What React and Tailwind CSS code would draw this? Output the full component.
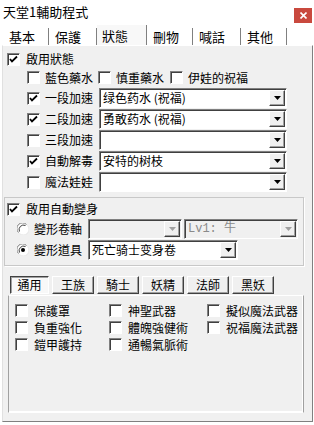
import React from "react";

const font = { fontFamily: '"Noto Sans CJK TC", "Noto Sans CJK SC", "Noto Sans", sans-serif' };

function Check({ on }) {
  return (
    <span className="w-[13px] h-[13px] shrink-0 bg-white border border-t-[#808080] border-l-[#808080] border-r-white border-b-white shadow-[inset_1px_1px_0_#404040] flex items-center justify-center">
      {on && (
        <svg width="9" height="9" viewBox="0 0 9 9">
          <path d="M1 4 L3 6.5 L8 1.5" fill="none" stroke="#000" strokeWidth="1.8" />
        </svg>
      )}
    </span>
  );
}

function Radio({ on }) {
  return (
    <svg width="12" height="12" viewBox="0 0 12 12" className="shrink-0">
      <circle cx="6" cy="6" r="5.5" fill="#fff" />
      <path d="M1.5 9.5 A5.5 5.5 0 0 1 9.5 1.5" fill="none" stroke="#808080" strokeWidth="1" />
      <path d="M2.5 8.5 A4.5 4.5 0 0 1 8.5 2.5" fill="none" stroke="#404040" strokeWidth="1" />
      <path d="M10.5 2.5 A5.5 5.5 0 0 1 2.5 10.5" fill="none" stroke="#e8e8e8" strokeWidth="1" />
      {on && <circle cx="6" cy="6" r="2" fill="#000" />}
    </svg>
  );
}

function Select({ w, text, disabled, mono }) {
  return (
    <div
      className={`h-[20px] flex items-center border border-t-[#808080] border-l-[#808080] border-r-white border-b-white shadow-[inset_1px_1px_0_#404040] ${disabled ? "bg-[#f0f0f0]" : "bg-white"}`}
      style={{ width: w }}
    >
      <span
        className={`flex-1 min-w-0 pl-[3px] text-[12px] leading-[18px] whitespace-nowrap ${disabled ? "text-[#8a8a8a]" : "text-black"}`}
        style={mono ? { fontFamily: '"Liberation Mono", "Noto Sans CJK TC", monospace' } : undefined}
      >
        {text}
      </span>
      <span className="w-[16px] h-[16px] shrink-0 mr-[1px] bg-[#f0f0f0] border border-t-white border-l-white border-r-[#404040] border-b-[#404040] shadow-[inset_-1px_-1px_0_#a0a0a0] flex items-center justify-center">
        <svg width="7" height="4" viewBox="0 0 7 4">
          <path d="M0 0 H7 L3.5 4 Z" fill={disabled ? "#a0a0a0" : "#000"} />
        </svg>
      </span>
    </div>
  );
}

function CheckLabel({ on, label, className = "" }) {
  return (
    <div className={`flex items-center gap-[5px] text-[12px] leading-none ${className}`}>
      <Check on={on} />
      <span>{label}</span>
    </div>
  );
}

const tabs = [
  ["基本", 46],
  ["保護", 48],
  ["狀態", 50],
  ["刪物", 46],
  ["喊話", 48],
  ["其他", 46],
];

const jobs = [
  ["通用", 39],
  ["王族", 42],
  ["騎士", 42],
  ["妖精", 42],
  ["法師", 42],
  ["黑妖", 42],
];

const rows = [
  [true, "一段加速", "绿色药水 (祝福)"],
  [true, "二段加速", "勇敢药水 (祝福)"],
  [false, "三段加速", ""],
  [true, "自動解毒", "安特的树枝"],
  [false, "魔法娃娃", ""],
];

export default function App() {
  return (
    <div className="w-[314px] h-[425px] bg-white text-black overflow-hidden" style={font}>
      <div className="h-[25px] flex items-center justify-between pl-[3px] pr-[2px]">
        <span className="text-[13px] leading-none mt-[-2px]">天堂1輔助程式</span>
        <div className="w-[18px] h-[15px] mt-[5px] bg-[#c9493e] flex items-center justify-center">
          <svg width="7" height="7" viewBox="0 0 7 7">
            <path d="M0.5 0.5 L6.5 6.5 M6.5 0.5 L0.5 6.5" stroke="#fff" strokeWidth="1.6" />
          </svg>
        </div>
      </div>

      <div className="h-[20px] flex items-end pl-[3px]">
        {tabs.map(([t, w]) => {
          const sel = t === "狀態";
          return (
            <div
              key={t}
              className={`flex items-center pl-[5px] text-[13px] leading-none border-r border-r-[#808080] ${sel ? "h-[20px] bg-[#f8f8f8]" : "h-[17px] bg-white border-l border-l-white"}`}
              style={{ width: w }}
            >
              {t}
            </div>
          );
        })}
      </div>

      <div className="ml-[2px] w-[311px] h-[377px] bg-[#f0f0f0] border border-t-white border-l-[#e0e0e0] border-r-[#808080] border-b-[#808080] flex flex-col pt-[4px]">
        <div className="h-[18px] flex items-center pl-[4px]">
          <CheckLabel on label="啟用狀態" className="gap-[6px]" />
        </div>
        <div className="h-[19px] flex items-center pl-[24px]">
          <CheckLabel label="藍色藥水" className="w-[71px]" />
          <CheckLabel label="慎重藥水" className="w-[72px]" />
          <CheckLabel label="伊娃的祝福" />
        </div>
        <div className="flex flex-col gap-[1px] mt-[1px]">
          {rows.map(([on, l, v]) => (
            <div key={l} className="h-[20px] flex items-center pl-[24px]">
              <CheckLabel on={on} label={l} className="w-[72px]" />
              <Select w={188} text={v} />
            </div>
          ))}
        </div>

        <div className="mt-[5px] ml-[1px] w-[300px] h-[69px] border border-[#c8c8c8] shadow-[1px_1px_0_#fff] flex flex-col pt-[2px]">
          <div className="h-[18px] flex items-center pl-[2px]">
            <CheckLabel on label="啟用自動變身" className="gap-[6px]" />
          </div>
          <div className="h-[21px] flex items-center pl-[12px]">
            <div className="flex items-center gap-[5px] w-[71px] text-[12px] leading-none">
              <Radio />
              <span>變形卷軸</span>
            </div>
            <Select w={94} text="" disabled />
            <div className="w-[2px]" />
            <Select w={114} text="Lv1: 牛" disabled mono />
          </div>
          <div className="h-[22px] flex items-center pl-[12px]">
            <div className="flex items-center gap-[5px] w-[71px] text-[12px] leading-none">
              <Radio on />
              <span>變形道具</span>
            </div>
            <Select w={150} text="死亡骑士变身卷" />
          </div>
        </div>

        <div className="mt-[10px] ml-[7px] flex gap-[3px] h-[18px]">
          {jobs.map(([t, w]) => {
            const sel = t === "通用";
            return (
              <div
                key={t}
                className={`h-[18px] flex items-center justify-center text-[12px] leading-none border ${sel ? "bg-[#f8f8f8] border-t-[#404040] border-l-[#404040] border-r-white border-b-white shadow-[inset_1px_1px_0_#a0a0a0]" : "bg-[#f0f0f0] border-t-white border-l-white border-r-[#404040] border-b-[#404040] shadow-[inset_-1px_-1px_0_#a0a0a0]"}`}
                style={{ width: w }}
              >
                {t}
              </div>
            );
          })}
        </div>

        <div className="mt-[1px] ml-[5px] w-[296px] h-[118px] border border-t-white border-l-[#a0a0a0] border-r-[#a0a0a0] border-b-white shadow-[inset_-1px_-1px_0_#fff] grid grid-cols-[94px_98px_1fr] auto-rows-[17px] content-start pt-[6px] pl-[6px]">
          <CheckLabel label="保護罩" className="gap-[6px]" />
          <CheckLabel label="神聖武器" className="gap-[6px]" />
          <CheckLabel label="擬似魔法武器" className="gap-[6px]" />
          <CheckLabel label="負重強化" className="gap-[6px]" />
          <CheckLabel label="體魄強健術" className="gap-[6px]" />
          <CheckLabel label="祝福魔法武器" className="gap-[6px]" />
          <CheckLabel label="鎧甲護持" className="gap-[6px]" />
          <CheckLabel label="通暢氣脈術" className="gap-[6px]" />
        </div>
      </div>
    </div>
  );
}
